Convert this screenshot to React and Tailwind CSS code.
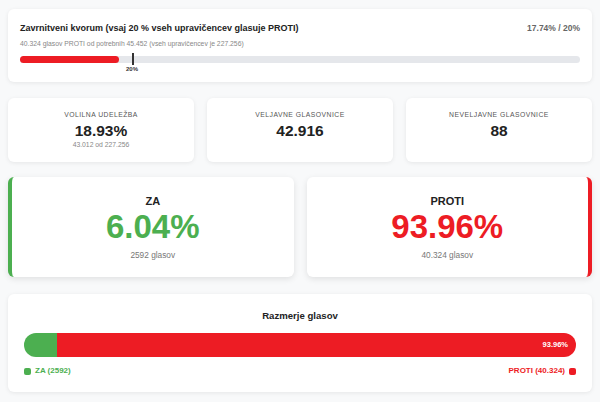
import React from "react";

const stats = [
  { label: "Volilna udeležba", value: "18.93%", sub: "43.012 od 227.256" },
  { label: "Veljavne glasovnice", value: "42.916" },
  { label: "Neveljavne glasovnice", value: "88" },
];

const App = () => {
  const quorum = 17.74;
  const za = 6.04;

  return (
    <div className="w-full min-h-[402px] bg-[#f8f9fa] px-2 pt-[9px] pb-3 font-['Liberation_Sans',Arial,sans-serif] text-[#222]">
      {/* quorum card */}
      <div className="bg-white rounded-md shadow-[0_1px_4px_rgba(0,0,0,0.08)] px-3 pt-[13px] pb-[12px]">
        <div className="flex items-center justify-between">
          <h2 className="text-[9px] font-bold leading-[12px]">
            Zavrnitveni kvorum (vsaj 20 % vseh upravičencev glasuje PROTI)
          </h2>
          <span className="text-[8.5px] font-bold text-[#666] leading-[12px]">17.74% / 20%</span>
        </div>
        <p className="mt-[5px] text-[6.8px] leading-[10px] text-[#888]">
          40.324 glasov PROTI od potrebnih 45.452 (vseh upravičencev je 227.256)
        </p>
        <div className="relative mt-[7px] h-[7px] rounded-full bg-[#e5e7eb]">
          <div className="h-full rounded-full bg-[#ed1c24]" style={{ width: `${quorum}%` }} />
          <div className="absolute left-[20%] top-[-3px] h-[12px] w-[2px] bg-[#333]" />
          <span className="absolute left-[20%] top-[10px] -translate-x-1/2 text-[6px] leading-[7px] font-bold text-[#333]">20%</span>
        </div>
        <div className="h-[7px]" />
      </div>

      {/* stats */}
      <div className="mt-4 grid grid-cols-3 gap-[13px]">
        {stats.map((s) => (
          <div key={s.label} className="bg-white rounded-md shadow-[0_1px_4px_rgba(0,0,0,0.08)] h-[64px] flex flex-col items-center pt-[12px]">
            <span className="text-[6.8px] leading-[10px] uppercase tracking-[0.07em] text-[#555]">{s.label}</span>
            <span className="mt-[2px] text-[15.5px] leading-[18px] font-bold text-[#222]">{s.value}</span>
            {s.sub && <span className="text-[6.8px] leading-[10px] text-[#888]">{s.sub}</span>}
          </div>
        ))}
      </div>

      {/* za / proti */}
      <div className="mt-[15px] grid grid-cols-2 gap-[13px]">
        <div className="bg-white rounded-md border-l-4 border-[#4caf50] shadow-[0_2px_6px_rgba(0,0,0,0.1)] h-[100px] flex flex-col items-center pt-[17px]">
          <span className="text-[11px] leading-[14px] font-bold text-[#222]">ZA</span>
          <span className="mt-[1px] text-[33px] leading-[36px] font-bold text-[#4caf50]">6.04%</span>
          <span className="mt-[5px] text-[8.3px] leading-[11px] text-[#777]">2592 glasov</span>
        </div>
        <div className="bg-white rounded-md border-r-4 border-[#ed1c24] shadow-[0_2px_6px_rgba(0,0,0,0.1)] h-[100px] flex flex-col items-center pt-[17px]">
          <span className="text-[11px] leading-[14px] font-bold text-[#222]">PROTI</span>
          <span className="mt-[1px] text-[33px] leading-[36px] font-bold text-[#ed1c24]">93.96%</span>
          <span className="mt-[5px] text-[8.3px] leading-[11px] text-[#777]">40.324 glasov</span>
        </div>
      </div>

      {/* ratio */}
      <div className="mt-[17px] bg-white rounded-md shadow-[0_1px_4px_rgba(0,0,0,0.08)] px-4 pt-[16px] pb-[16px]">
        <h3 className="text-center text-[9.6px] leading-[12px] font-bold text-[#222]">Razmerje glasov</h3>
        <div className="mt-[11px] flex h-[24px] rounded-full overflow-hidden">
          <div className="h-full bg-[#4caf50]" style={{ width: `${za}%` }} />
          <div className="h-full flex-1 bg-[#ed1c24] flex items-center justify-end pr-[8px]">
            <span className="text-[7.5px] font-bold text-white">93.96%</span>
          </div>
        </div>
        <div className="mt-[9px] flex items-center justify-between text-[8px] font-bold leading-[10px]">
          <div className="flex items-center gap-[4px] text-[#4caf50]">
            <span className="w-[7px] h-[7px] rounded-[2px] bg-[#4caf50]" />
            ZA (2592)
          </div>
          <div className="flex items-center gap-[4px] text-[#ed1c24]">
            PROTI (40.324)
            <span className="w-[7px] h-[7px] rounded-[2px] bg-[#ed1c24]" />
          </div>
        </div>
      </div>
    </div>
  );
};

export default App;
